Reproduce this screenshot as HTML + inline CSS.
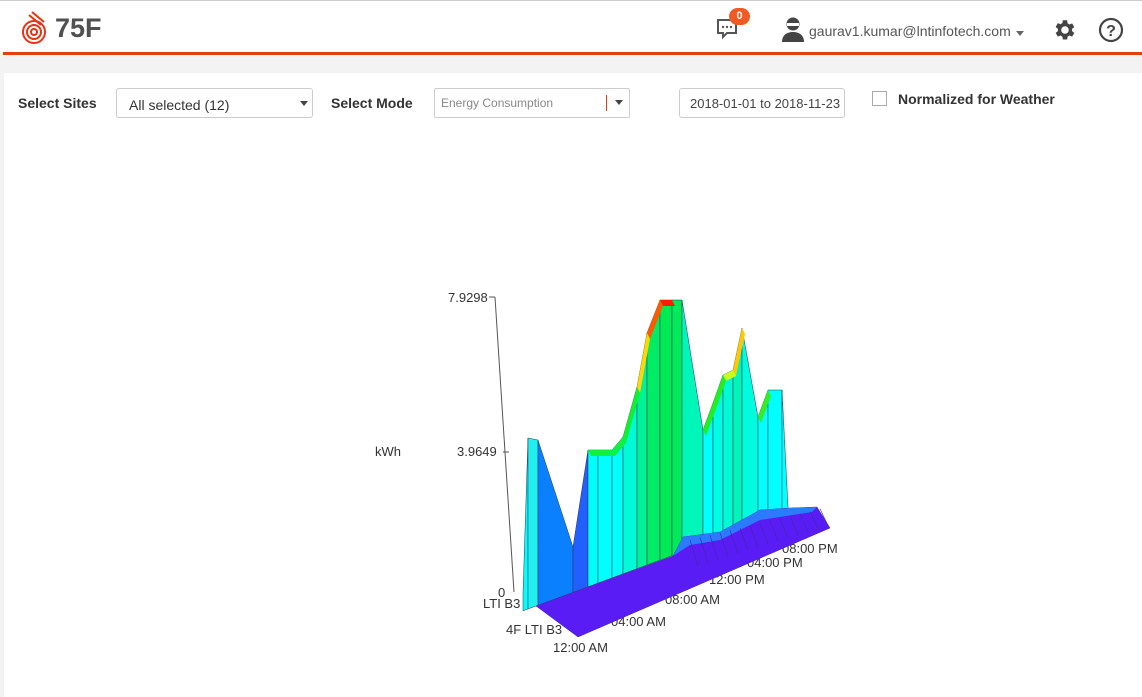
<!DOCTYPE html>
<html><head><meta charset="utf-8"><style>
*{box-sizing:border-box;margin:0;padding:0}
body{width:1142px;height:697px;background:#f3f3f3;font-family:"Liberation Sans",Arial,sans-serif;position:relative;overflow:hidden;color:#333}
.hdr{position:absolute;left:0;top:0;width:1142px;height:52px;background:#fff;border-top:1px solid #ccc}
.line{position:absolute;left:3px;top:52px;width:1139px;height:3px;background:#e2400d}
.panel{position:absolute;left:4px;top:73px;width:1138px;height:624px;background:#fff}
.lbl{position:absolute;font-weight:bold;font-size:14px;color:#333}
.sel{position:absolute;border:1px solid #ccc;border-radius:3px;background:#fff}
.caret{position:absolute;width:0;height:0;border-left:4px solid transparent;border-right:4px solid transparent;border-top:5px solid #444}
</style></head><body>
<div class="hdr">
 <svg style="position:absolute;left:20px;top:10px" width="30" height="34" viewBox="0 0 30 34" fill="none" stroke="#e63312" stroke-width="2">
  <circle cx="14" cy="21" r="11"/><circle cx="14" cy="21" r="7"/><circle cx="14" cy="21" r="3"/>
  <path d="M9 4 L21 14 M12 1 L24 11"/>
 </svg>
 <div style="position:absolute;left:55px;top:12px;font-size:27px;font-weight:bold;color:#505050;letter-spacing:0px">75F</div>
 <svg style="position:absolute;left:716px;top:17px" width="24" height="22" viewBox="0 0 24 22"><path d="M2 2h18v13H11l-4 4v-4H2z" fill="none" stroke="#555" stroke-width="2"/><circle cx="7" cy="9" r="1.2" fill="#555"/><circle cx="11" cy="9" r="1.2" fill="#555"/><circle cx="15" cy="9" r="1.2" fill="#555"/></svg>
 <div style="position:absolute;left:729px;top:7px;width:21px;height:17px;border-radius:9px;background:#f15a22;color:#fff;font-size:11px;font-weight:bold;text-align:center;line-height:17px">0</div>
 <svg style="position:absolute;left:781px;top:15px" width="24" height="26" viewBox="0 0 24 26"><circle cx="12" cy="8" r="6.5" fill="#444"/><path d="M1 26c0-7 5-10 11-10s11 3 11 10z" fill="#444"/><rect x="6" y="7" width="12" height="3" fill="#fff"/></svg>
 <div style="position:absolute;left:809px;top:22px;font-size:14px;color:#555">gaurav1.kumar@lntinfotech.com</div>
 <div class="caret" style="left:1016px;top:30px;border-top-color:#666"></div>
 <svg style="position:absolute;left:1051px;top:16px" width="26" height="26" viewBox="0 0 24 24"><path fill="#444" d="M19.4 13a7.5 7.5 0 0 0 0-2l2.1-1.6-2-3.5-2.5 1a7.6 7.6 0 0 0-1.7-1L14.9 3h-4l-.4 2.7a7.6 7.6 0 0 0-1.7 1l-2.5-1-2 3.5L6.4 11a7.5 7.5 0 0 0 0 2l-2.1 1.6 2 3.5 2.5-1a7.6 7.6 0 0 0 1.7 1l.4 2.7h4l.4-2.7a7.6 7.6 0 0 0 1.7-1l2.5 1 2-3.5zM12.9 15.5a3.5 3.5 0 1 1 0-7 3.5 3.5 0 0 1 0 7z"/></svg>
 <svg style="position:absolute;left:1098px;top:16px" width="26" height="26" viewBox="0 0 26 26"><circle cx="13" cy="13" r="11" fill="none" stroke="#444" stroke-width="2.2"/><text x="13" y="19" text-anchor="middle" font-size="16" font-weight="bold" fill="#444" font-family="Liberation Sans">?</text></svg>
</div>
<div class="line"></div>
<div class="panel"></div>
<div class="lbl" style="left:18px;top:95px">Select Sites</div>
<div class="sel" style="left:116px;top:88px;width:197px;height:30px"><span style="position:absolute;left:12px;top:8px;font-size:14px;color:#333">All selected (12)</span><div class="caret" style="left:183px;top:12px"></div></div>
<div class="lbl" style="left:331px;top:95px">Select Mode</div>
<div class="sel" style="left:434px;top:88px;width:196px;height:30px;border-radius:2px"><span style="position:absolute;left:6px;top:7px;font-size:12px;color:#888">Energy Consumption</span><div style="position:absolute;left:171px;top:6px;width:1px;height:16px;background:#e2400d"></div><div class="caret" style="left:180px;top:11px"></div></div>
<div class="sel" style="left:679px;top:88px;width:166px;height:30px"><span style="position:absolute;left:10px;top:7px;font-size:13px;color:#444">2018-01-01 to 2018-11-23</span></div>
<div style="position:absolute;left:872px;top:91px;width:15px;height:15px;border:1px solid #aaa;background:#fff"></div>
<div class="lbl" style="left:898px;top:91px">Normalized for Weather</div>

<svg id="ch" style="position:absolute;left:0;top:0" width="1142" height="697" font-family="Liberation Sans" font-size="13" fill="#333">
 <line x1="495" y1="297" x2="514" y2="592" stroke="#555" stroke-width="1"/>
 <line x1="489" y1="297" x2="495" y2="297" stroke="#555"/>
 <line x1="503" y1="452" x2="509" y2="452" stroke="#555"/>
 <text x="448" y="302">7.9298</text>
 <text x="457" y="456">3.9649</text>
 <text x="375" y="456">kWh</text>
 <text x="498" y="597">0</text>
 <text x="483" y="608">LTI B3</text>
 <text x="506" y="634">4F LTI B3</text>
 <text x="553" y="652">12:00 AM</text>
 <text x="611" y="626">04:00 AM</text>
 <text x="665" y="604">08:00 AM</text>
 <text x="709" y="584">12:00 PM</text>
 <text x="747" y="567">04:00 PM</text>
 <text x="782" y="553">08:00 PM</text>
 <g id="g"></g>
</svg>
<script>
var t=[[523,593],[528,438],[538,440],[573,547],[588,450],[598,450],[612,450],[623,437],[637,387],[647,333],[660,300],[672,300],[682,300],[703,430],[713,403],[723,375],[733,370],[742,328],[758,417],[768,390],[782,390],[788,507]];
function base(x){return 606-(x-536)*0.37;}
function col(h){h=Math.max(0,Math.min(1,h));var g=Math.round(255-h*25),b=Math.round(255-h*200);return "rgb(0,"+g+","+b+")";}
var s="";
s+='<polygon points="523,593 540,608 532,602" fill="#1e90ff"/>';
for(var i=0;i<t.length-1;i++){var a=t[i],b=t[i+1];var h=((base(a[0])-a[1])+(base(b[0])-b[1]))/2;var c=col((h-130)/150);
if(i==2)c="#0a80ff";if(i==3)c="#2060ff";if(i==1)c="#20f0f0";
s+='<polygon points="'+a[0]+','+a[1]+' '+b[0]+','+b[1]+' '+b[0]+','+base(b[0])+' '+a[0]+','+base(a[0])+'" fill="'+c+'" stroke="#335" stroke-width="0.5"/>';}
s+='<polygon points="536,606 578,637 830,528 817,507 790,508 760,510 720,532 683,537 673,556 536,606" fill="#5a1cf5" stroke="#3a2aa0" stroke-width="0.5"/>';
s+='<polygon points="673,556 683,537 720,532 760,510 790,508 817,507 812,512 760,520 720,540 690,545" fill="#2a7bff"/>';
for(var k=0;k<14;k++){var x=690+k*10;s+='<line x1="'+x+'" y1="'+(540-k*2.4)+'" x2="'+(x+8)+'" y2="'+(566-k*3.1)+'" stroke="#3a2aa0" stroke-width="0.6"/>';}
var caps=[[9,10,"#ff5a00"],[10,11,"#ff1a00"],[8,9,"#ffd800"],[16,17,"#ffc800"],[15,16,"#c8ff20"],[7,8,"#10f030"],[4,5,"#10f040"],[5,6,"#10f040"],[6,7,"#10f040"],[13,14,"#20f020"],[14,15,"#20f020"],[18,19,"#30f020"]];
caps.forEach(function(c){var a=t[c[0]],b=t[c[1]];s+='<polygon points="'+a[0]+','+a[1]+' '+b[0]+','+b[1]+' '+(b[0]+3)+','+(b[1]+6)+' '+(a[0]+3)+','+(a[1]+6)+'" fill="'+c[2]+'"/>';});
document.getElementById("g").innerHTML=s;
</script>
</body></html>
